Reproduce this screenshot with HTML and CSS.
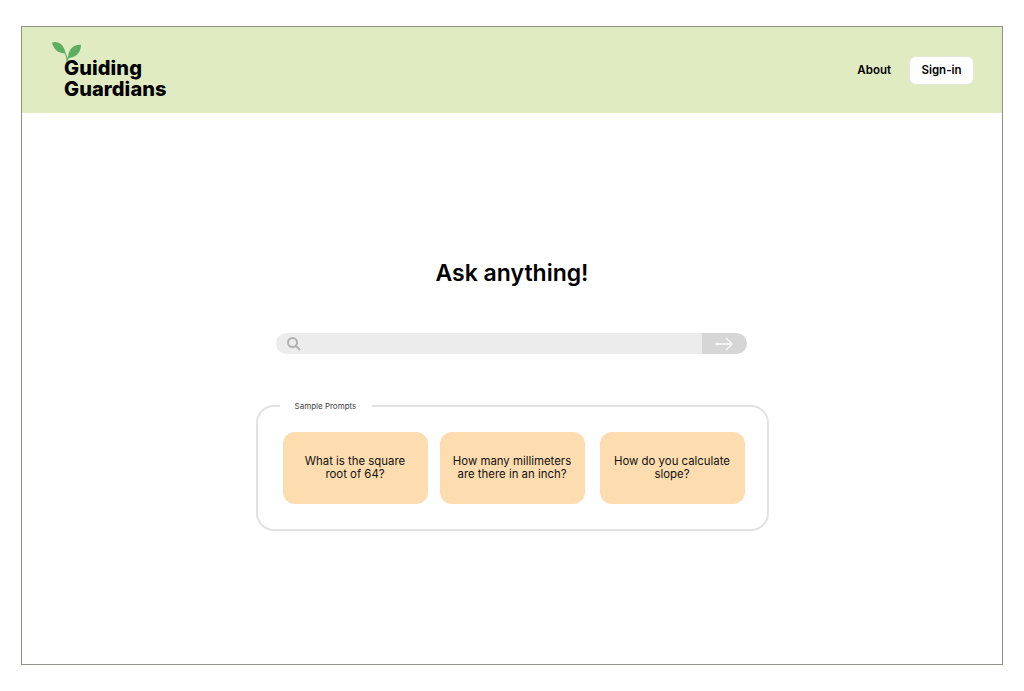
FILE: index.html
```html
<!DOCTYPE html>
<html lang="en">
<head>
<meta charset="utf-8">
<title>Guiding Guardians</title>
<link rel="stylesheet" href="styles.css">
</head>
<body>
<div class="frame">
  <header class="header">
    <div class="logo">
      <svg class="sprout" width="32" height="22" viewBox="0 0 32 22" aria-hidden="true">
        <path class="stem" d="M15 21C15.300 17 14.500 14 12.500 11.500M15.200 19C15.500 18 16 17 17 16"/>
        <path class="leaf" d="M0 1.500C5 -0.500 12 2.500 13.500 12C7 13 1.500 8.500 0 1.500Z"/>
        <path class="leaf" d="M29 4C24 3 16 6.500 16 17C23 17 29 12 29 4Z"/>
      </svg>
      <div class="brand">Guiding<br>Guardians</div>
    </div>
    <nav class="nav">
      <a class="nav-link">About</a>
      <a class="signin">Sign-in</a>
    </nav>
  </header>
  <main class="main">
    <h1 class="title">Ask anything!</h1>
    <div class="search">
      <div class="search-input">
        <svg width="14" height="14" viewBox="0 0 14 14" aria-hidden="true">
          <circle class="search-icon" cx="5.500" cy="5.500" r="4.500"/>
          <path class="search-icon" d="M9 9L13 13"/>
        </svg>
      </div>
      <div class="search-go">
        <svg width="18" height="14" viewBox="0 0 18 14" aria-hidden="true">
          <path class="go-icon" d="M0.500 7H17M11 1L17 7L11 13"/>
        </svg>
      </div>
    </div>
    <fieldset class="prompts">
      <legend class="prompts-label">Sample Prompts</legend>
      <div class="prompt-row">
        <button class="prompt">What is the square root of 64?</button>
        <button class="prompt">How many millimeters are there in an inch?</button>
        <button class="prompt prompt-last">How do you calculate slope?</button>
      </div>
    </fieldset>
  </main>
</div>
</body>
</html>
```
FILE: styles.css
```css
* { box-sizing: border-box; }
html, body { margin: 0; height: 100%; background: #fff; }
body {
  padding: 26px 21px;
  font-family: Inter, "Liberation Sans", sans-serif;
  color: #000;
}
.frame {
  width: 982px;
  height: 639px;
  border: 1px solid #8f9488;
  display: flex;
  flex-direction: column;
}
.header {
  height: 86px;
  flex: none;
  background: #e1ebc1;
  display: flex;
  align-items: center;
  justify-content: space-between;
  padding: 0 28px 0 30px;
}
.logo { display: flex; flex-direction: column; }
.sprout { display: block; margin-bottom: -5px; }
.leaf { fill: #5cae62; }
.stem { fill: none; stroke: #5cae62; stroke-width: 1.2; }
.brand {
  margin-left: 12px;
  font-family: Inter, sans-serif;
  font-weight: 800;
  font-size: 20px;
  line-height: 21px;
  letter-spacing: 0.1px;
}
.nav { display: flex; align-items: center; gap: 18px; }
.nav-link { font-size: 11.500px; font-weight: 600; }
.signin {
  width: 65px;
  height: 29px;
  background: #fff;
  border: 1px solid #e6e9da;
  border-radius: 7px;
  font-size: 11.500px;
  font-weight: 600;
  display: flex;
  align-items: center;
  justify-content: center;
}
.main {
  flex: 1;
  display: flex;
  flex-direction: column;
  align-items: center;
  padding-top: 146px;
}
.title {
  margin: 0;
  font-size: 23px;
  line-height: 28px;
  font-weight: 600;
}
.search {
  margin: 46px 0 0 -1px;
  width: 471px;
  height: 21px;
  display: flex;
  border-radius: 11px;
  overflow: hidden;
}
.search-input {
  flex: 1;
  background: #ececec;
  display: flex;
  align-items: center;
  padding-left: 11px;
}
.search-icon { fill: none; stroke: #b0b0b0; stroke-width: 2; }
.search-go {
  width: 45px;
  background: #d6d6d6;
  display: flex;
  align-items: center;
  padding-left: 13px;
}
.go-icon { fill: none; stroke: #fff; stroke-width: 1.300; }
.prompts {
  margin: 47px 0 0;
  width: 513px;
  height: 130px;
  padding: 21px 0 0 25px;
  border: 2px solid #e2e2e2;
  border-radius: 18px;
}
.prompts-label {
  margin-left: -3px;
  padding: 0 16px 0 15px;
  font-size: 8px;
  line-height: 10px;
  color: #444;
}
.prompt-row { display: flex; gap: 12px; }
.prompt {
  width: 145px;
  height: 72px;
  padding: 0 10px;
  border: 0;
  border-radius: 12px;
  background: #fddcaf;
  font-family: inherit;
  font-size: 11.400px;
  line-height: 13px;
  color: #111;
  text-align: center;
}
.prompt-last { margin-left: 3px; }
```
